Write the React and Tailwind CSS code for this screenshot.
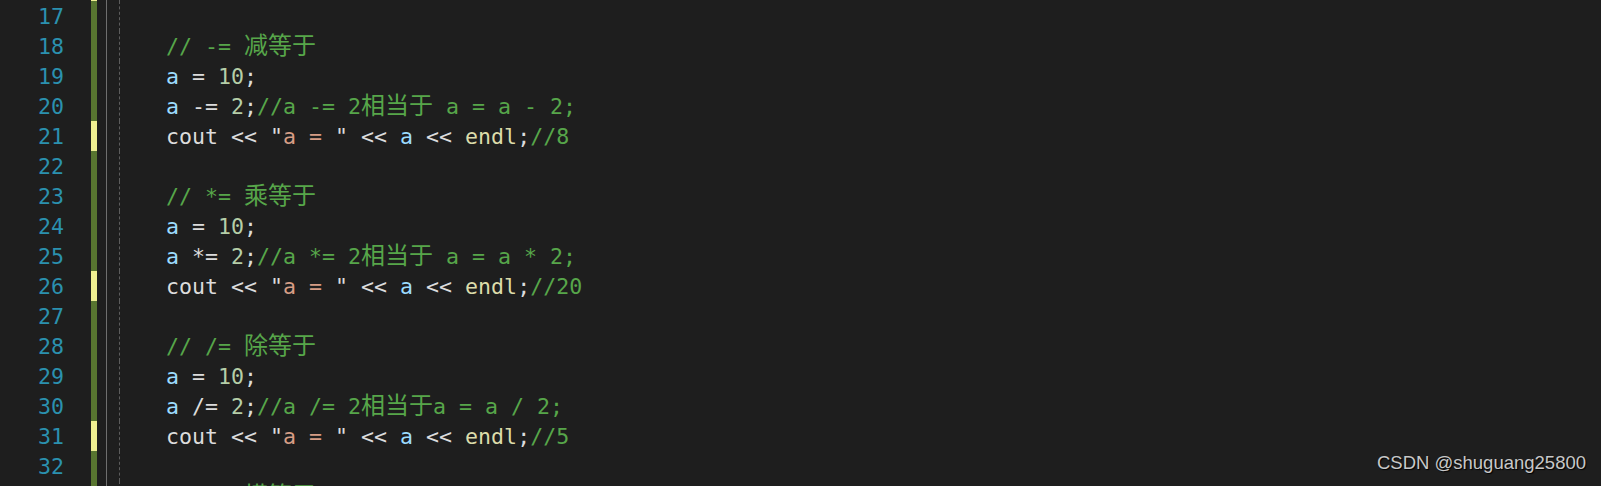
import React from 'react';

const C = {
  plain: 'text-[#dcdcdc]',
  cmt: 'text-[#57a64a]',
  v: 'text-[#9cdcfe]',
  num: 'text-[#b5cea8]',
  str: 'text-[#d69d85]',
  fn: 'text-[#dcdcaa]',
};

// [text, colorKey, cjk?]
const assignLines = (op, name, cmtTail, result) => [
  [['// ' + op + ' ', 'cmt'], [name, 'cmt', true]],
  [['a', 'v'], [' = ', 'plain'], ['10', 'num'], [';', 'plain']],
  [['a', 'v'], [' ' + op + ' ', 'plain'], ['2', 'num'], [';', 'plain'], ['//a ' + op + ' 2', 'cmt'], ['相当于', 'cmt', true], [cmtTail, 'cmt']],
  [['cout << ', 'plain'], ['"', 'plain'], ['a = ', 'str'], ['"', 'plain'], [' << ', 'plain'], ['a', 'v'], [' << ', 'plain'], ['endl', 'fn'], [';', 'plain'], ['//' + result, 'cmt']],
  [],
];

const lines = [
  // line 16 only shows its change marker (1px)
  { n: 16, code: [], mark: 'yellow', hideNum: true },
  { n: 17, code: [] },
  ...[
    ...assignLines('-=', '减等于', ' a = a - 2;', '8'),
    ...assignLines('*=', '乘等于', ' a = a * 2;', '20'),
    ...assignLines('/=', '除等于', 'a = a / 2;', '5'),
  ].map((code, i) => ({ n: 18 + i, code, mark: i % 5 === 3 ? 'yellow' : 'green' })),
  { n: 33, code: [['// %= ', 'cmt'], ['模等于', 'cmt', true]] },
];

const Row = ({ line }) => (
  <div className="flex h-[30px] shrink-0">
    <div className="w-[64px] pt-[2px] leading-[28px] text-right text-[#2b91af]">
      {line.hideNum ? '' : line.n}
    </div>
    <div
      className={
        'ml-[27px] w-[6px] ' +
        (line.mark === 'yellow' ? 'bg-[#efef91]' : 'bg-[#587530]')
      }
    />
    <div className="ml-[9px] w-[1px] bg-[#6e6e6e]" />
    <div className="ml-[12px] border-l border-dashed border-[#5c5c5c]" />
    <div className="ml-[46px] pt-[2px] leading-[28px] whitespace-pre">
      {line.code.map(([t, c, cjk], i) => (
        <span
          key={i}
          className={
            C[c] +
            (cjk ? " text-[24px] leading-[20px] font-['Noto_Sans_CJK_SC',sans-serif]" : '')
          }
        >
          {t}
        </span>
      ))}
    </div>
  </div>
);

export default function App() {
  return (
    <div className="relative h-[486px] w-[1601px] overflow-hidden bg-[#1e1e1e] font-['DejaVu_Sans_Mono','Noto_Sans_CJK_SC',monospace] text-[21.6px]">
      <div className="-mt-[29px] flex flex-col">
        {lines.map((l) => (
          <Row key={l.n} line={l} />
        ))}
      </div>
      {/* watermark */}
      <div className="absolute right-[15px] bottom-[9px] font-['Liberation_Sans',Arial,sans-serif] text-[18.5px] text-[#c8c8c8] [text-shadow:1px_1px_1px_#000]">
        CSDN @shuguang25800
      </div>
    </div>
  );
}
